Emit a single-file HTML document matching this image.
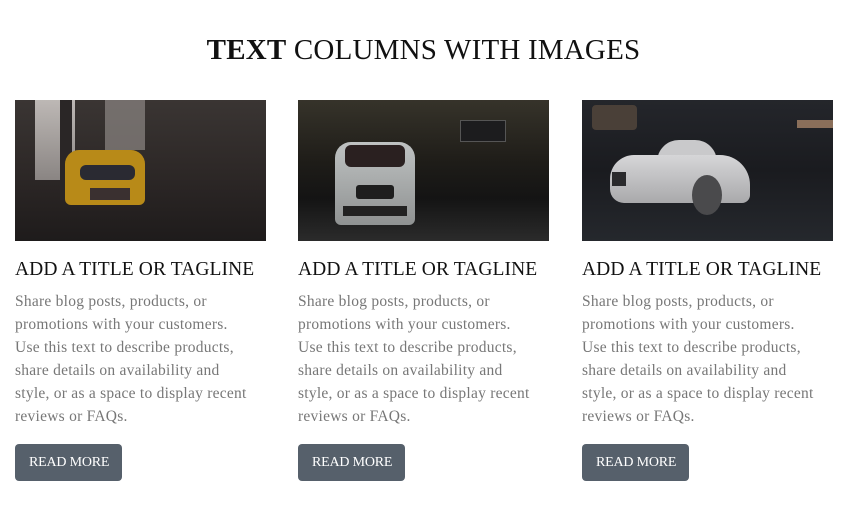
<!DOCTYPE html>
<html><head><meta charset="utf-8"><style>
*{margin:0;padding:0;box-sizing:border-box}
body{width:847px;height:508px;background:#fff;font-family:"Liberation Serif",serif;position:relative;overflow:hidden}
h1{position:absolute;top:34px;left:0;width:847px;text-align:center;font-weight:normal;font-size:29px;color:#111;letter-spacing:0.2px}
h1 b{font-weight:bold}
.col{position:absolute;top:100px;width:251px}
.img{width:251px;height:141px;position:relative;overflow:hidden}
h2{margin-top:18px;font-weight:normal;font-size:19.5px;color:#111;white-space:nowrap;letter-spacing:0.1px}
p{margin-top:9px;font-size:15.5px;line-height:23px;color:#777;letter-spacing:0.25px;white-space:nowrap}
.btn{display:inline-block;margin-top:16px;background:#56606b;color:#fff;font-size:14px;padding:0 13px 0 14px;height:37px;line-height:37px;border-radius:4px;letter-spacing:-0.2px}
.s{position:absolute}
</style></head><body>
<h1><b>TEXT</b> COLUMNS WITH IMAGES</h1>

<div class="col" style="left:15px">
<div class="img" style="background:linear-gradient(180deg,#3a3533 0%,#2c2726 55%,#1e1b1b 100%)">
<div class="s" style="left:20px;top:0;width:40px;height:80px;background:linear-gradient(#bdb8b5,#8a8583)"></div>
<div class="s" style="left:45px;top:0;width:12px;height:100px;background:#2a2626"></div>
<div class="s" style="left:90px;top:0;width:40px;height:50px;background:#8d8885;opacity:.7"></div>
<div class="s" style="left:50px;top:50px;width:80px;height:55px;background:#b88a18;border-radius:14px 14px 6px 6px"></div>
<div class="s" style="left:65px;top:65px;width:55px;height:15px;background:#2a2a32;border-radius:6px"></div>
<div class="s" style="left:75px;top:88px;width:40px;height:12px;background:#3a3030"></div>
</div>
<h2>ADD A TITLE OR TAGLINE</h2>
<p>Share blog posts, products, or<br>promotions with your customers.<br>Use this text to describe products,<br>share details on availability and<br>style, or as a space to display recent<br>reviews or FAQs.</p>
<div class="btn">READ MORE</div>
</div>

<div class="col" style="left:298px">
<div class="img" style="background:linear-gradient(180deg,#36332a 0%,#1e1c18 45%,#141414 70%,#2b2b2b 100%)">
<div class="s" style="left:162px;top:20px;width:46px;height:22px;background:#1c1c1e;border:1px solid #555"></div>
<div class="s" style="left:37px;top:42px;width:80px;height:83px;background:linear-gradient(#bfc2c2,#8f9292);border-radius:16px 16px 6px 6px"></div>
<div class="s" style="left:47px;top:45px;width:60px;height:22px;background:#2a2020;border-radius:6px"></div>
<div class="s" style="left:58px;top:85px;width:38px;height:14px;background:#1e1e1e;border-radius:3px"></div>
<div class="s" style="left:45px;top:106px;width:64px;height:10px;background:#222"></div>
</div>
<h2>ADD A TITLE OR TAGLINE</h2>
<p>Share blog posts, products, or<br>promotions with your customers.<br>Use this text to describe products,<br>share details on availability and<br>style, or as a space to display recent<br>reviews or FAQs.</p>
<div class="btn">READ MORE</div>
</div>

<div class="col" style="left:582px">
<div class="img" style="background:linear-gradient(180deg,#24262b 0%,#1a1b1f 50%,#25282d 100%)">
<div class="s" style="left:10px;top:5px;width:45px;height:25px;background:#4a4038;border-radius:4px"></div>
<div class="s" style="left:215px;top:20px;width:36px;height:8px;background:#b89070;opacity:.7"></div>
<div class="s" style="left:75px;top:40px;width:60px;height:22px;background:#c9c9cb;border-radius:30px 30px 0 0"></div>
<div class="s" style="left:28px;top:55px;width:140px;height:48px;background:linear-gradient(#d6d6d8,#a9a9ab);border-radius:24px 30px 8px 14px"></div>
<div class="s" style="left:110px;top:75px;width:30px;height:40px;background:#4a4a4c;border-radius:50%"></div>
<div class="s" style="left:30px;top:72px;width:14px;height:14px;background:#2a2a2c"></div>
</div>
<h2>ADD A TITLE OR TAGLINE</h2>
<p>Share blog posts, products, or<br>promotions with your customers.<br>Use this text to describe products,<br>share details on availability and<br>style, or as a space to display recent<br>reviews or FAQs.</p>
<div class="btn">READ MORE</div>
</div>
</body></html>
